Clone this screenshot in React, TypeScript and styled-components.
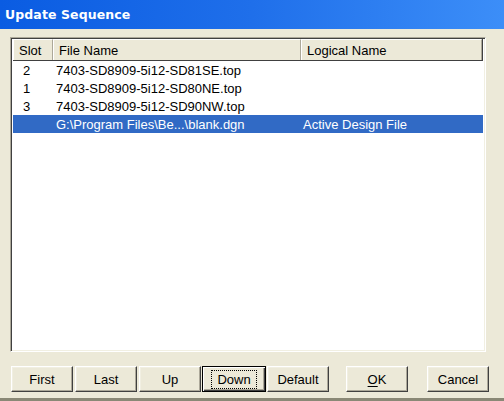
import styled, { createGlobalStyle } from 'styled-components'

const GlobalStyle = createGlobalStyle`
    html, body {
        margin: 0;
        padding: 0;
        background: #ece9d8;
    }
`

const FONT = `"Liberation Sans", Arial, sans-serif`

interface Row {
    slot: string
    file: string
    logical: string
    selected?: boolean
}

const rows: Row[] = [
    { slot: '2', file: '7403-SD8909-5i12-SD81SE.top', logical: '' },
    { slot: '1', file: '7403-SD8909-5i12-SD80NE.top', logical: '' },
    { slot: '3', file: '7403-SD8909-5i12-SD90NW.top', logical: '' },
    { slot: '', file: 'G:\\Program Files\\Be...\\blank.dgn', logical: 'Active Design File', selected: true },
]

const Window = styled.div`
    width: 504px;
    height: 401px;
    display: flex;
    flex-direction: column;
    background: #ece9d8;
    border-bottom: 3px solid #8a8876;
    box-sizing: border-box;
    font-family: ${FONT};
    font-size: 13px;
    overflow: hidden;
`

const TitleBar = styled.div`
    height: 29px;
    flex: none;
    display: flex;
    align-items: center;
    padding-left: 5px;
    background: linear-gradient(to right, #0a5ce2 0%, #1f6fea 50%, #3c8ef8 100%);
    color: #fff;
    font-family: "DejaVu Sans", Verdana, sans-serif;
    font-weight: bold;
    font-size: 12.5px;
    letter-spacing: 0.1px;
`

const Body = styled.div`
    flex: 1;
    display: flex;
    flex-direction: column;
    padding: 8px 18px 0 10px;
`

const ListBox = styled.div`
    height: 315px;
    background: #fff;
    border: 1px solid;
    border-color: #aca899 #fff #fff #aca899;
    box-shadow: inset 1px 1px #404040, inset -1px -1px #f1efe2;
    padding: 2px 2px 2px 2px;
    box-sizing: border-box;
`

const Header = styled.div`
    display: grid;
    grid-template-columns: 40px 248px 1fr;
    height: 21px;
    margin: -1px 0 0 0;
    border-bottom: 1px solid #404040;
    border-right: 1px solid #404040;
`

const HeaderCell = styled.div`
    display: flex;
    align-items: center;
    padding-left: 5px;
    background: #ece9d8;
    border-left: 1px solid #fff;
    border-top: 1px solid #fff;
    border-right: 1px solid #aca899;
    color: #000;
`

const ListRow = styled.div<{ $selected?: boolean }>`
    display: grid;
    grid-template-columns: 40px 248px 1fr;
    height: 18px;
    align-items: center;
    background: ${(p) => (p.$selected ? '#316ac5' : 'transparent')};
    color: ${(p) => (p.$selected ? '#fff' : '#000')};
`

const Cell = styled.div<{ $pad: number }>`
    padding-left: ${(p) => p.$pad}px;
    white-space: nowrap;
`

const ButtonBar = styled.div`
    display: flex;
    align-items: center;
    margin-top: 14px;
    padding-left: 1px;
    margin-right: -3px;
`

const Group = styled.div<{ $gap: number }>`
    display: flex;
    gap: ${(p) => p.$gap}px;
`

const Spacer = styled.div`
    width: 18px;
`

const Button = styled.button<{ $focused?: boolean }>`
    width: ${(p) => (p.$focused ? 64 : 62)}px;
    height: 26px;
    padding: 0;
    margin: 0 ${(p) => (p.$focused ? -1 : 0)}px;
    background: #ece9d8;
    font-family: ${FONT};
    font-size: 13px;
    color: #000;
    border: 1px solid;
    border-color: ${(p) => (p.$focused ? '#000' : '#fff #404040 #404040 #fff')};
    box-shadow: ${(p) =>
        p.$focused
            ? 'inset 1px 1px #fff, inset -1px -1px #404040, inset -2px -2px #aca899'
            : 'inset -1px -1px #aca899, inset 1px 1px #f1efe2'};

    span {
        display: inline-block;
        padding: 1px 5px;
        outline: ${(p) => (p.$focused ? '1px dotted #000' : 'none')};
    }

    u {
        text-decoration: underline;
        text-underline-offset: 2px;
    }
`

const App = () => {
    return (
        <Window>
            <GlobalStyle />
            <TitleBar>Update Sequence</TitleBar>
            <Body>
                <ListBox>
                    <Header>
                        <HeaderCell>Slot</HeaderCell>
                        <HeaderCell>File Name</HeaderCell>
                        <HeaderCell>Logical Name</HeaderCell>
                    </Header>
                    {rows.map((r, i) => (
                        <ListRow key={i} $selected={r.selected}>
                            <Cell $pad={10}>{r.slot}</Cell>
                            <Cell $pad={3}>{r.file}</Cell>
                            <Cell $pad={2}>{r.logical}</Cell>
                        </ListRow>
                    ))}
                </ListBox>
                <ButtonBar>
                    <Group $gap={2}>
                        <Button><span>First</span></Button>
                        <Button><span>Last</span></Button>
                        <Button><span>Up</span></Button>
                        <Button $focused><span>Down</span></Button>
                        <Button><span>Default</span></Button>
                    </Group>
                    <Spacer />
                    <Group $gap={19}>
                        <Button><span><u>O</u>K</span></Button>
                        <Button><span>Cancel</span></Button>
                    </Group>
                </ButtonBar>
            </Body>
        </Window>
    )
}

export default App
